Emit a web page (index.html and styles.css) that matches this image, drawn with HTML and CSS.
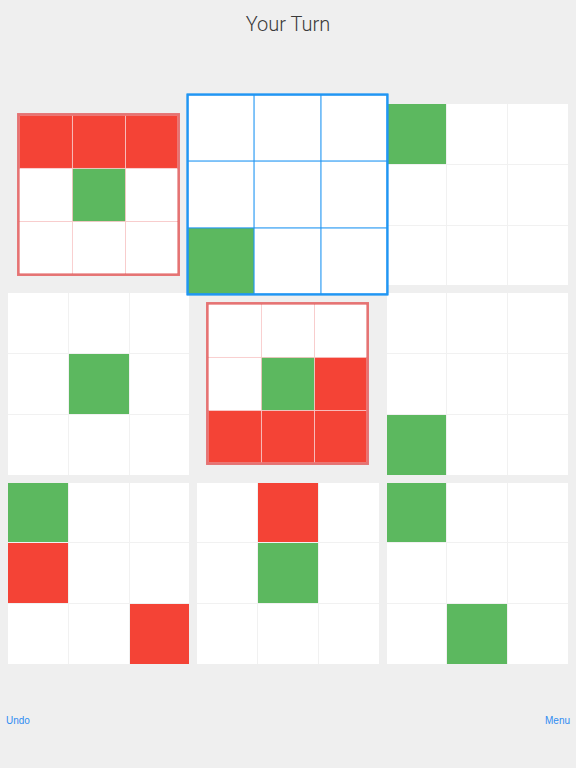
FILE: index.html
```html
<!DOCTYPE html>
<html>
<head>
<meta charset="utf-8">
<link rel="stylesheet" href="styles.css">
</head>
<body>
<div class="screen">
  <header class="title">Your Turn</header>
  <main class="boards">
    <div class="board small">
      <div class="cell red"></div><div class="cell red"></div><div class="cell red"></div>
      <div class="cell"></div><div class="cell green"></div><div class="cell"></div>
      <div class="cell"></div><div class="cell"></div><div class="cell"></div>
    </div>
    <div class="board active">
      <div class="cell"></div><div class="cell"></div><div class="cell"></div>
      <div class="cell"></div><div class="cell"></div><div class="cell"></div>
      <div class="cell green"></div><div class="cell"></div><div class="cell"></div>
    </div>
    <div class="board">
      <div class="cell green"></div><div class="cell"></div><div class="cell"></div>
      <div class="cell"></div><div class="cell"></div><div class="cell"></div>
      <div class="cell"></div><div class="cell"></div><div class="cell"></div>
    </div>
    <div class="board">
      <div class="cell"></div><div class="cell"></div><div class="cell"></div>
      <div class="cell"></div><div class="cell green"></div><div class="cell"></div>
      <div class="cell"></div><div class="cell"></div><div class="cell"></div>
    </div>
    <div class="board small">
      <div class="cell"></div><div class="cell"></div><div class="cell"></div>
      <div class="cell"></div><div class="cell green"></div><div class="cell red"></div>
      <div class="cell red"></div><div class="cell red"></div><div class="cell red"></div>
    </div>
    <div class="board">
      <div class="cell"></div><div class="cell"></div><div class="cell"></div>
      <div class="cell"></div><div class="cell"></div><div class="cell"></div>
      <div class="cell green"></div><div class="cell"></div><div class="cell"></div>
    </div>
    <div class="board">
      <div class="cell green"></div><div class="cell"></div><div class="cell"></div>
      <div class="cell red"></div><div class="cell"></div><div class="cell"></div>
      <div class="cell"></div><div class="cell"></div><div class="cell red"></div>
    </div>
    <div class="board">
      <div class="cell"></div><div class="cell red"></div><div class="cell"></div>
      <div class="cell"></div><div class="cell green"></div><div class="cell"></div>
      <div class="cell"></div><div class="cell"></div><div class="cell"></div>
    </div>
    <div class="board">
      <div class="cell green"></div><div class="cell"></div><div class="cell"></div>
      <div class="cell"></div><div class="cell"></div><div class="cell"></div>
      <div class="cell"></div><div class="cell green"></div><div class="cell"></div>
    </div>
  </main>
  <footer class="toolbar">
    <span class="link">Undo</span>
    <span class="link">Menu</span>
  </footer>
</div>
</body>
</html>
```

FILE: styles.css
```css
html, body {
  margin: 0;
  padding: 0;
  background: #efefef;
}

.screen {
  width: 576px;
  height: 768px;
  display: flex;
  flex-direction: column;
  box-sizing: border-box;
}

.title {
  height: 48px;
  line-height: 48px;
  text-align: center;
  font-family: Roboto, "Liberation Sans", sans-serif;
  font-weight: 300;
  font-size: 20px;
  color: #3a3a3a;
}

.boards {
  margin-top: 56px;
  padding: 0 8px;
  display: grid;
  grid-template-columns: repeat(3, 1fr);
  gap: 8px;
}

.board {
  box-sizing: border-box;
  aspect-ratio: 1 / 1;
  display: grid;
  grid-template-columns: repeat(3, 1fr);
  grid-template-rows: repeat(3, 1fr);
  gap: 1px;
  background: #f1f1f1;
}

.cell {
  background: #ffffff;
}

.cell.red {
  background: #f44336;
}

.cell.green {
  background: #5cb85f;
}

.board.small {
  transform: scale(0.9);
  border: 3px solid #e57373;
  background: #f8c9c9;
}

.board.active {
  position: relative;
  z-index: 2;
  transform: scale(1.115);
  border: 2px solid #2196f3;
  background: #2196f3;
}

.toolbar {
  margin-top: auto;
  height: 96px;
  display: flex;
  justify-content: space-between;
  align-items: flex-start;
  padding: 43px 6px 0;
  box-sizing: border-box;
  font-family: "Liberation Sans", Arial, sans-serif;
  font-size: 10px;
  line-height: 12px;
  color: #2f8cf2;
}
```
